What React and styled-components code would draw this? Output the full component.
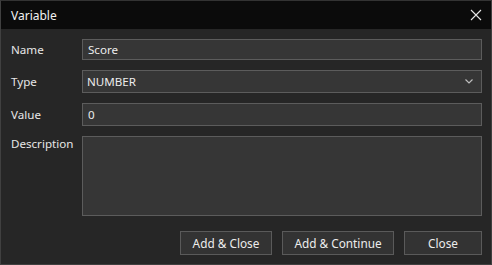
import React from "react";
import styled, { createGlobalStyle } from "styled-components";

const Global = createGlobalStyle`
  html, body { margin: 0; padding: 0; background: #262626; }
  body { font-family: "Noto Sans", "Open Sans", sans-serif; }
`;

const Window = styled.div`
  width: 492px;
  height: 265px;
  box-sizing: border-box;
  border: 1px solid #404040;
  border-top-color: #333;
  background: #262626;
  display: flex;
  flex-direction: column;
  color: #e6e6e6;
  font-size: 11.6px;
`;

const TitleBar = styled.div`
  height: 28px;
  flex: none;
  background: #0b0b0b;
  display: flex;
  align-items: center;
  justify-content: space-between;
  padding: 0 9px 0 10px;
  color: #f2f2f2;
  font-size: 12px;
`;

const CloseBtn = styled.button`
  width: 12px;
  height: 12px;
  padding: 0;
  border: none;
  background: none;
  display: flex;
  color: #e8e8e8;
`;

const Body = styled.div`
  flex: 1;
  padding: 10px 9px 0 9px;
  display: flex;
  flex-direction: column;
`;

const Row = styled.div`
  display: grid;
  grid-template-columns: 72px 1fr;
  align-items: ${(p) => (p.$top ? "start" : "center")};
  margin-bottom: ${(p) => p.$mb}px;
`;

const Label = styled.label`
  padding-left: 1px;
`;

const Field = styled.div`
  box-sizing: border-box;
  height: ${(p) => p.$h}px;
  background: #363636;
  border: 1px solid #5c5c5c;
  display: flex;
  align-items: center;
  justify-content: space-between;
  padding: 0 8px 0 ${(p) => p.$pl || 5}px;
  color: #ececec;
`;

const Buttons = styled.div`
  display: flex;
  justify-content: flex-end;
  gap: 10px;
`;

const Button = styled.button`
  box-sizing: border-box;
  height: 24px;
  width: ${(p) => p.$w}px;
  background: #333333;
  border: 1px solid #5a5a5a;
  color: #ececec;
  font-family: inherit;
  font-size: 11.8px;
  padding: 0;
`;

export default function App() {
  return (
    <>
      <Global />
      <Window>
        <TitleBar>
          <span>Variable</span>
          <CloseBtn aria-label="Close">
            <svg width="12" height="12" viewBox="0 0 12 12">
              <path d="M1 1 L11 11 M11 1 L1 11" stroke="currentColor" strokeWidth="1.1" />
            </svg>
          </CloseBtn>
        </TitleBar>
        <Body>
          <Row $mb={10}>
            <Label>Name</Label>
            <Field $h={21}>Score</Field>
          </Row>
          <Row $mb={10}>
            <Label>Type</Label>
            <Field $h={23} $pl={4}>
              <span>NUMBER</span>
              <svg width="8" height="5" viewBox="0 0 8 5">
                <path d="M0.5 0.5 L4 4 L7.5 0.5" fill="none" stroke="#bdbdbd" strokeWidth="1.2" />
              </svg>
            </Field>
          </Row>
          <Row $mb={10}>
            <Label>Value</Label>
            <Field $h={23}>0</Field>
          </Row>
          <Row $mb={15} $top>
            <Label>Description</Label>
            <Field $h={80} />
          </Row>
          <Buttons>
            <Button $w={92}>Add &amp; Close</Button>
            <Button $w={112}>Add &amp; Continue</Button>
            <Button $w={78}>Close</Button>
          </Buttons>
        </Body>
      </Window>
    </>
  );
}
